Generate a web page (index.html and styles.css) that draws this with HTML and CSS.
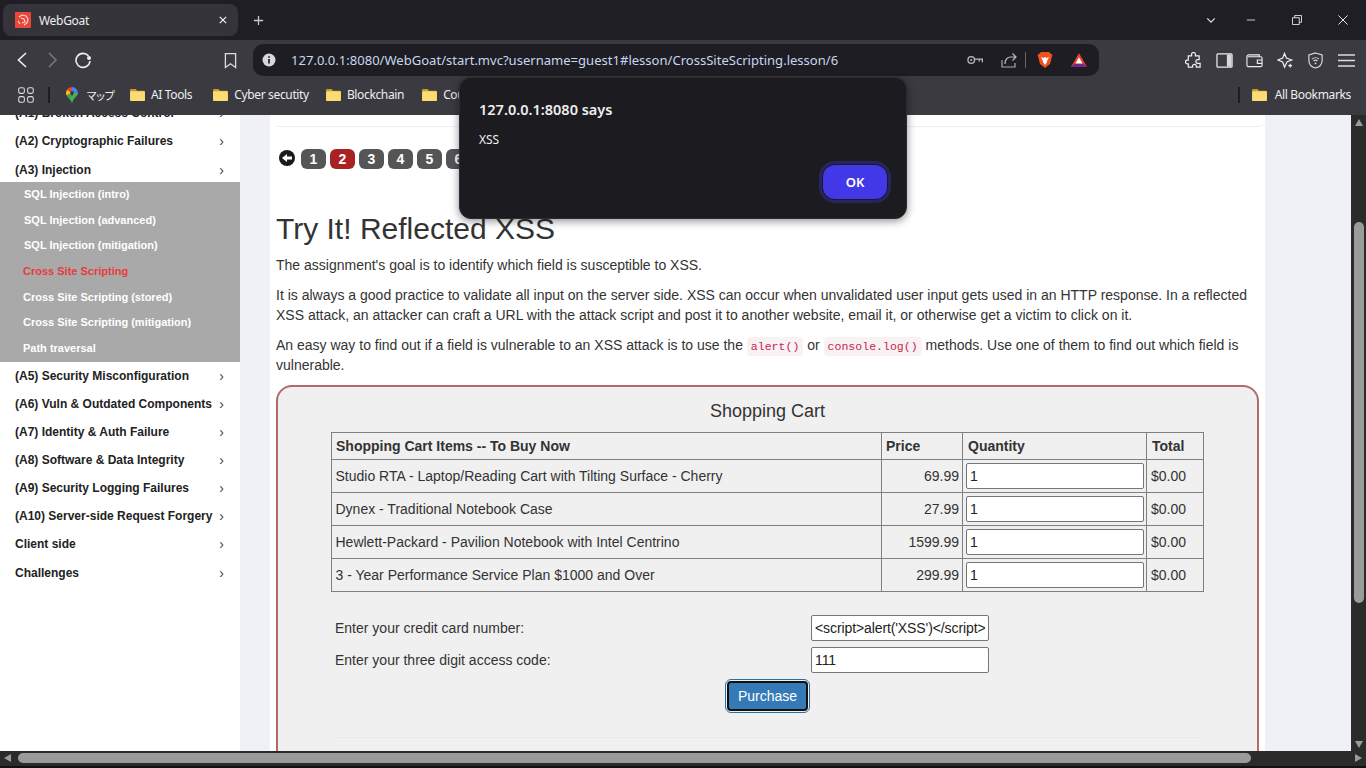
FILE: index.html
```html
<!DOCTYPE html>
<html lang="en">
<head>
  <meta charset="UTF-8">
  <title>WebGoat</title>
  <link rel="stylesheet" href="styles.css">
</head>
<body>
  <!-- Tab strip -->
  <div class="tabstrip">
    <div class="tab">
      <svg class="favicon" viewBox="0 0 16 16"><rect width="16" height="16" rx="1" fill="#e8483a"/><path d="M4 5l3-2 4 1 2 3-1 4-3 2M6 6l3 1 1 3-3 1M3 9l2 3" fill="none" stroke="#ffd9d2" stroke-width="1.1"/></svg>
      <span class="tab-title">WebGoat</span>
      <svg class="tab-close" viewBox="0 0 10 10"><path d="M1 1l8 8M9 1l-8 8" stroke="#f1f1f1" stroke-width="1.5"/></svg>
    </div>
    <svg class="new-tab" viewBox="0 0 12 12"><path d="M6 1v10M1 6h10" stroke="#c9c9cc" stroke-width="1.4"/></svg>
    <div class="win-controls">
      <svg class="win-chevron" viewBox="0 0 12 8"><path d="M1.5 1.5L6 6l4.5-4.5" fill="none" stroke="#e8e8e8" stroke-width="1.4"/></svg>
      <svg class="win-min" viewBox="0 0 12 2"><path d="M1 1h10" stroke="#e8e8e8" stroke-width="1"/></svg>
      <svg class="win-max" viewBox="0 0 11 11"><path d="M.5 3h7.5v7.5H.5zM3 3V.5h7.5V8H8" fill="none" stroke="#e8e8e8"/></svg>
      <svg class="win-close" viewBox="0 0 11 11"><path d="M.5.5l10 10M10.5.5l-10 10" stroke="#e8e8e8" stroke-width="1.1"/></svg>
    </div>
  </div>

  <!-- Toolbar -->
  <div class="toolbar">
    <svg class="nav-back" viewBox="0 0 10 16"><path d="M9 1L1.500 8 9 15" fill="none" stroke="#eee" stroke-width="1.6"/></svg>
    <svg class="nav-forward" viewBox="0 0 10 16"><path d="M1 1l7 7-7 7" fill="none" stroke="#77767b" stroke-width="1.6"/></svg>
    <svg class="nav-reload" viewBox="0 0 18 18"><path d="M14.5 5A7 7 0 1 0 16 10" fill="none" stroke="#eee" stroke-width="1.6"/><circle cx="15" cy="7" r="2" fill="#eee"/></svg>
    <svg class="nav-bookmark" viewBox="0 0 14 18"><path d="M1.5 1.5h11v15L7 12.500l-5.500 4z" fill="none" stroke="#ddd" stroke-width="1.4"/></svg>
    <div class="addressbar">
      <svg class="site-info" viewBox="0 0 14 14"><circle cx="7" cy="7" r="6.500" fill="#d8d8da"/><path d="M7 6v4.500M7 3.200v1.500" stroke="#1e1d23" stroke-width="1.700"/></svg>
      <span class="url">127.0.0.1:8080/WebGoat/start.mvc?username=guest1#lesson/CrossSiteScripting.lesson/6</span>
      <svg class="addr-key" viewBox="0 0 17 10"><circle cx="4.500" cy="5" r="3.500" fill="none" stroke="#bbb" stroke-width="1.400"/><circle cx="4.500" cy="5" r="1" fill="#bbb"/><path d="M8 4h8.300v3.500M13 4v2.500" fill="none" stroke="#bbb" stroke-width="1.400"/></svg>
      <svg class="addr-share" viewBox="0 0 16 16"><path d="M1 8v7h13v-4" fill="none" stroke="#aaa" stroke-width="1.200"/><path d="M4 12c0-5 3-7 6-7h5M11.500 1.500L15 5l-3.500 3.500" fill="none" stroke="#bbb" stroke-width="1.200"/></svg>
      <span class="addr-sep"></span>
      <svg class="addr-brave" viewBox="0 0 16 18"><path d="M4 1h8l1.500 1.500L15.500 4l-1 3-1.500 6-5 4-5-4-1.500-6-1-3L2.500 2.500z" fill="#f1531f"/><path d="M4 6l2.500 1L8 6l1.500 1L12 6l-1.500 3L9.500 12 8 14l-1.500-2-1-3z" fill="#fff"/></svg>
      <svg class="addr-bat" viewBox="0 0 20 18"><path d="M10 1L19 17H1z" fill="#e9402f"/><path d="M1 17l4.500-4h9l4.500 4z" fill="#6c2a8c"/><path d="M10 6l4 7H6z" fill="#fff"/></svg>
    </div>
    <div class="tool-icons">
      <svg viewBox="0 0 18 18"><path d="M7 2.500a2 2 0 0 1 4 0V4h4v4h-1.500a2 2 0 0 0 0 4H16v4h-4v-1a2 2 0 0 0-4 0v1H3.500v-3.500H2.500a2 2 0 0 1 0-4h1V4H7z" fill="none" stroke="#eee" stroke-width="1.300"/></svg>
      <svg viewBox="0 0 18 16"><rect x="1" y="1" width="16" height="14" rx="1" fill="none" stroke="#eee" stroke-width="1.300"/><rect x="11.500" y="1.500" width="5" height="13" fill="#d8d8d8"/></svg>
      <svg viewBox="0 0 18 16"><path d="M1 4a2 2 0 0 1 2-2h11v2M1 4v9a1.500 1.500 0 0 0 1.500 1.500h13A1.500 1.500 0 0 0 17 13V5.500A1.500 1.500 0 0 0 15.500 4H2M17 7.500h-5v3.500h5" fill="none" stroke="#eee" stroke-width="1.200"/></svg>
      <svg viewBox="0 0 18 18"><path d="M8 1.500l2 5 5.500 2-5 2-1 2.500-1.500 3-2-5.500-5-2 5-2z" fill="none" stroke="#eee" stroke-width="1.300"/><path d="M14 12.500v4M12 14.500h4" stroke="#eee" stroke-width="1.300"/></svg>
      <svg viewBox="0 0 16 18"><path d="M8 1l7 2v6c0 4-3 7-7 8-4-1-7-4-7-8V3z" fill="none" stroke="#ddd" stroke-width="1.200"/><path d="M4.500 7.500a5 5 0 0 1 7 0M6 9.500a3 3 0 0 1 4 0" fill="none" stroke="#ddd" stroke-width="1.200"/><circle cx="8" cy="12" r="1" fill="#ddd"/></svg>
      <svg viewBox="0 0 17 14"><path d="M0 1.500h17M0 7h17M0 12.500h17" stroke="#ddd" stroke-width="1.500"/></svg>
    </div>
  </div>

  <!-- Bookmarks bar -->
  <div class="bookmarks">
    <svg class="apps" viewBox="0 0 18 18"><g fill="none" stroke="#ddd" stroke-width="1.200"><rect x=".8" y=".8" width="6.400" height="6.400" rx="2"/><rect x="10.800" y=".8" width="6.400" height="6.400" rx="2"/><rect x=".8" y="10.800" width="6.400" height="6.400" rx="2"/><rect x="10.800" y="10.800" width="6.400" height="6.400" rx="2"/></g></svg>
    <span class="bm-sep"></span>
    <svg class="maps-pin" viewBox="0 0 12 16"><path d="M6 0a6 6 0 0 1 6 6H8a2 2 0 0 0-2-2z" fill="#4285f4"/><path d="M6 0a6 6 0 0 0-5 2.700L4.400 5A2 2 0 0 1 6 4z" fill="#ea4335"/><path d="M1 2.700A6 6 0 0 0 .6 8.500L4.400 7a2 2 0 0 1 0-2z" fill="#fbbc04"/><path d="M.6 8.500C2 11.500 5 13 6 16l2-5-3.600-4z" fill="#34a853"/><path d="M12 6c0 3-5 5-6 10l-1.200-5L8 6z" fill="#4caf50"/></svg>
    <span class="bm-label bm-first">マップ</span>
    <svg class="folder" viewBox="0 0 16 14"><use href="#folder-shape"/></svg><span class="bm-label bm-ai">AI Tools</span>
    <svg class="folder" viewBox="0 0 16 14"><use href="#folder-shape"/></svg><span class="bm-label bm-cyber">Cyber secutity</span>
    <svg class="folder" viewBox="0 0 16 14"><use href="#folder-shape"/></svg><span class="bm-label bm-chain">Blockchain</span>
    <svg class="folder" viewBox="0 0 16 14"><use href="#folder-shape"/></svg><span class="bm-label">Courses</span>
    <span class="bm-right">
      <span class="bm-sep"></span>
      <svg class="folder" viewBox="0 0 16 14"><use href="#folder-shape"/></svg><span class="bm-label">All Bookmarks</span>
    </span>
  </div>

  <svg class="defs" width="0" height="0"><defs><g id="folder-shape"><path d="M1 1h5l1.500 2H15a1 1 0 0 1 1 1v9a1 1 0 0 1-1 1H1a1 1 0 0 1-1-1V2a1 1 0 0 1 1-1z" fill="#c99a2e"/><rect y="3.500" width="16" height="10.500" rx="1" fill="#fbdc74"/></g></defs></svg>

  <!-- Page area -->
  <div class="viewport">
    <aside class="sidebar">
      <div class="menu-item">(A1) Broken Access Control<span class="chev">&rsaquo;</span></div>
      <div class="menu-item">(A2) Cryptographic Failures<span class="chev">&rsaquo;</span></div>
      <div class="menu-item menu-short">(A3) Injection<span class="chev">&rsaquo;</span></div>
      <div class="submenu">
        <div class="sub-item sub-sql">SQL Injection (intro)</div>
        <div class="sub-item sub-sql">SQL Injection (advanced)</div>
        <div class="sub-item sub-sql">SQL Injection (mitigation)</div>
        <div class="sub-item sub-active">Cross Site Scripting</div>
        <div class="sub-item">Cross Site Scripting (stored)</div>
        <div class="sub-item">Cross Site Scripting (mitigation)</div>
        <div class="sub-item">Path traversal</div>
      </div>
      <div class="menu-item">(A5) Security Misconfiguration<span class="chev">&rsaquo;</span></div>
      <div class="menu-item">(A6) Vuln &amp; Outdated Components<span class="chev">&rsaquo;</span></div>
      <div class="menu-item">(A7) Identity &amp; Auth Failure<span class="chev">&rsaquo;</span></div>
      <div class="menu-item">(A8) Software &amp; Data Integrity<span class="chev">&rsaquo;</span></div>
      <div class="menu-item">(A9) Security Logging Failures<span class="chev">&rsaquo;</span></div>
      <div class="menu-item">(A10) Server-side Request Forgery<span class="chev">&rsaquo;</span></div>
      <div class="menu-item">Client side<span class="chev">&rsaquo;</span></div>
      <div class="menu-item menu-last">Challenges<span class="chev">&rsaquo;</span></div>
    </aside>

    <main class="content-wrap">
      <div class="content">
        <div class="top-rule"></div>
        <div class="pager">
          <svg class="pager-back" viewBox="0 0 16 16"><circle cx="8" cy="8" r="8" fill="#1a1a1a"/><path d="M3 8l5-4v2.500h5v3H8V12z" fill="#fff"/></svg>
          <span class="pill">1</span>
          <span class="pill pill-active">2</span>
          <span class="pill">3</span>
          <span class="pill">4</span>
          <span class="pill">5</span>
          <span class="pill">6</span>
          <span class="pill">7</span>
        </div>
        <h1>Try It! Reflected XSS</h1>
        <p>The assignment's goal is to identify which field is susceptible to XSS.</p>
        <p>It is always a good practice to validate all input on the server side. XSS can occur when unvalidated user input gets used in an HTTP response. In a reflected XSS attack, an attacker can craft a URL with the attack script and post it to another website, email it, or otherwise get a victim to click on it.</p>
        <p>An easy way to find out if a field is vulnerable to an XSS attack is to use the <code>alert()</code> or <code>console.log()</code> methods. Use one of them to find out which field is vulnerable.</p>

        <!-- Shopping cart -->
        <div class="attack">
          <div class="cart-title">Shopping Cart</div>
          <table class="cart">
            <thead>
              <tr>
                <th class="col-item">Shopping Cart Items -- To Buy Now</th>
                <th class="col-price">Price</th>
                <th class="col-qty">Quantity</th>
                <th class="col-total">Total</th>
              </tr>
            </thead>
            <tbody>
              <tr>
                <td>Studio RTA - Laptop/Reading Cart with Tilting Surface - Cherry</td>
                <td class="num">69.99</td>
                <td><input class="qty" type="text" value="1"></td>
                <td>$0.00</td>
              </tr>
              <tr>
                <td>Dynex - Traditional Notebook Case</td>
                <td class="num">27.99</td>
                <td><input class="qty" type="text" value="1"></td>
                <td>$0.00</td>
              </tr>
              <tr>
                <td>Hewlett-Packard - Pavilion Notebook with Intel Centrino</td>
                <td class="num">1599.99</td>
                <td><input class="qty" type="text" value="1"></td>
                <td>$0.00</td>
              </tr>
              <tr>
                <td>3 - Year Performance Service Plan $1000 and Over</td>
                <td class="num">299.99</td>
                <td><input class="qty" type="text" value="1"></td>
                <td>$0.00</td>
              </tr>
            </tbody>
          </table>
          <div class="pay-row">
            <label>Enter your credit card number:</label>
            <input class="pay-input" type="text" value="<script>alert('XSS')</script>">
          </div>
          <div class="pay-row">
            <label>Enter your three digit access code:</label>
            <input class="pay-input" type="text" value="111">
          </div>
          <div class="pay-action"><button class="purchase" type="button">Purchase</button></div>
          <div class="bottom-rule"></div>
        </div>
      </div>
    </main>

    <div class="vscroll">
      <span class="arrow-up"></span>
      <span class="vthumb"></span>
      <span class="arrow-down"></span>
    </div>
  </div>

  <div class="hscroll">
    <span class="arrow-left"></span>
    <span class="hthumb"></span>
    <span class="arrow-right"></span>
  </div>

  <!-- Alert dialog -->
  <div class="dialog">
    <div class="dialog-title">127.0.0.1:8080 says</div>
    <div class="dialog-text">XSS</div>
    <div class="dialog-actions"><button class="dialog-ok" type="button">OK</button></div>
  </div>
</body>
</html>
```

FILE: styles.css
```css
* { box-sizing: border-box; }
html, body { margin: 0; height: 100%; }
body { width: 1366px; height: 768px; overflow: hidden; display: flex; flex-direction: column; font-family: "Liberation Sans", Arial, sans-serif; background: #1f1e24; position: relative; }
.defs { position: absolute; }

/* tab strip */
.tabstrip { height: 40px; flex: none; display: flex; align-items: flex-start; background: #1f1e24; padding: 4px 0 0 3px; }
.tab { width: 235px; height: 32px; background: #35343a; border-radius: 8px; display: flex; align-items: center; padding: 0 11px 0 12px; color: #eee; font: 12px "Noto Sans", sans-serif; letter-spacing: -.3px; }
.favicon { width: 16px; height: 16px; margin-right: 8px; }
.tab-title { flex: 1; }
.tab-close { width: 8px; height: 8px; }
.new-tab { width: 11px; height: 11px; margin: 11px 0 0 15px; }
.win-controls { margin-left: auto; display: flex; align-items: center; height: 32px; }
.win-chevron { width: 10px; height: 7px; margin-right: 30px; }
.win-min { width: 10px; height: 2px; margin-right: 36px; }
.win-max { width: 10px; height: 10px; margin-right: 36px; }
.win-close { width: 10px; height: 10px; margin-right: 18px; }

/* toolbar */
.toolbar { height: 40px; flex: none; display: flex; align-items: center; background: #3b3a41; }
.nav-back, .nav-forward { width: 10px; height: 16px; }
.nav-back { margin-left: 17px; }
.nav-forward { margin-left: 21px; }
.nav-reload { width: 18px; height: 18px; margin-left: 16px; }
.nav-bookmark { width: 13px; height: 17px; margin-left: 132px; }
.addressbar { width: 846px; height: 32px; margin-left: 16px; background: #1e1d23; border-radius: 10px; display: flex; align-items: center; padding-left: 9px; }
.site-info { width: 14px; height: 14px; }
.url { margin-left: 15px; color: #c6d8ee; font: 13.05px "Noto Sans", sans-serif; width: 676px; white-space: nowrap; }
.addr-key { width: 16px; height: 10px; }
.addr-share { width: 16px; height: 16px; margin-left: 18px; }
.addr-sep { width: 1px; height: 16px; background: #666; margin-left: 8px; }
.addr-brave { width: 16px; height: 18px; margin-left: 11px; }
.addr-bat { width: 18px; height: 16px; margin-left: 17px; }
.tool-icons { display: flex; align-items: center; margin-left: 86px; gap: 13.5px; }
.tool-icons svg { width: 17px; height: 17px; }

/* bookmarks */
.bookmarks { height: 35px; flex: none; display: flex; align-items: center; background: #3b3a41; color: #eee; font: 12px "Noto Sans", "Noto Sans CJK JP", sans-serif; letter-spacing: -.35px; padding: 0 0 6px 18px; overflow: hidden; }
.apps { width: 16px; height: 16px; }
.bm-sep { width: 2px; height: 16px; background: #1e1d23; margin: 0 16px 0 14px; }
.maps-pin { width: 12px; height: 16px; margin-right: 8px; }
.folder { width: 15px; height: 13px; margin-right: 6px; }
.bm-first { font-size: 11px; letter-spacing: -2px; margin-right: 17px; }
.bm-ai { margin-right: 21px; }
.bm-cyber { margin-right: 17px; }
.bm-chain { margin-right: 18px; }
.bm-right { margin-left: auto; display: flex; align-items: center; padding-right: 15px; }
.bm-right .bm-sep { margin-right: 12px; }
.bm-right .folder { margin-right: 8px; }

/* page */
.viewport { flex: 1; min-height: 0; display: flex; overflow: hidden; background: #eff1f7; }
.sidebar { width: 240px; flex: none; background: #fff; overflow: hidden; }
.menu-item { height: 28px; padding: 0 16px 0 15px; display: flex; align-items: center; justify-content: space-between; font-size: 12px; font-weight: bold; color: #222; }
.menu-item:first-child { margin-top: -16px; }
.menu-short { height: 27px; padding-top: 2px; }
.menu-last { padding-top: 2px; }
.chev { font-size: 14px; font-weight: normal; color: #444; }
.submenu { background: #a9a9a9; height: 180px; }
.sub-item { height: 25.7px; padding: 0 0 2px 23px; display: flex; align-items: center; font-size: 11px; font-weight: bold; color: #fff; }
.sub-sql { padding-left: 24px; }
.sub-active { color: #e93b3b; }

.content-wrap { width: 1111px; flex: none; padding: 0 86px 0 30px; overflow: hidden; }
.content { background: #fff; height: 100%; padding: 0 6px; color: #333; font-size: 14px; line-height: 20px; overflow: hidden; }
.top-rule { height: 12px; border-bottom: 1px solid #eee; margin-right: -6px; border-radius: 0 0 6px 0; }
.pager { display: flex; align-items: center; gap: 4px; margin-top: 22px; height: 20px; padding-left: 3px; }
.pager-back { width: 16px; height: 16px; margin: -3px 2px 0 0; }
.pill { width: 25px; height: 20px; background: #555; color: #fff; border-radius: 6px; font-size: 14px; font-weight: bold; line-height: 20px; text-align: center; }
.pill-active { background: #a82222; }
h1 { margin: 42px 0 0; font-size: 30px; font-weight: normal; line-height: 36px; color: #333; }
p { margin: 0 0 10px; }
h1 + p { margin-top: 8px; }
code { font-family: "Liberation Mono", monospace; font-size: 11.55px; line-height: 1; color: #c7254e; background: #f9f2f4; padding: 3px 4px; border-radius: 4px; }

.attack { height: 400px; background: #f0f0f0; border: 2px solid #b56a6a; border-radius: 16px; padding: 0 53px; }
.cart-title { font-size: 18px; line-height: 20px; text-align: center; margin: 14px 0 11px; }
.cart { border-collapse: collapse; width: 872px; table-layout: fixed; }
.cart th, .cart td { border: 1px solid #808080; padding: 0 4px; text-align: left; }
.cart th { height: 27px; }
.cart td { height: 33px; }
.cart th:nth-child(n+3) { padding-left: 5px; }
.cart td:first-child { padding-left: 3.5px; }
.col-item { width: 550px; }
.col-price { width: 81px; }
.col-qty { width: 184px; }
.col-total { width: 57px; }
.cart .num { text-align: right; padding-right: 3px; }
.cart td:nth-child(3) { padding: 0 3px; }
input { font: 14px "Liberation Sans", Arial, sans-serif; color: #222; background: #fff; border: 1px solid #767676; border-radius: 2px; padding: 0 3px; display: block; }
.qty { width: 178px; height: 26px; }
.pay-row { display: flex; align-items: center; justify-content: space-between; padding: 0 215px 0 4px; height: 26px; margin-bottom: 6px; }
.cart + .pay-row { margin-top: 23px; }
.pay-input { width: 178px; height: 26px; letter-spacing: -0.1px; }
.pay-action { text-align: center; }
.purchase { width: 81px; height: 30px; margin: 2px 0; background: #337ab7; color: #fff; font: 14px "Liberation Sans", Arial, sans-serif; border: 2px solid #111; border-radius: 4px; outline: 1px solid #2e6da4; outline-offset: 1px; }
.bottom-rule { border-top: 1px solid #eaeaea; margin: 24px 4px 0 4px; }

/* scrollbars */
.vscroll { width: 15px; flex: none; background: #2b2b2b; display: flex; flex-direction: column; align-items: center; }
.arrow-up { width: 0; height: 0; margin-top: 4px; border: 4.5px solid transparent; border-top: 0; border-bottom: 7px solid #9b9b9b; }
.vthumb { width: 10px; height: 381px; margin-top: 96px; background: #9b9b9b; border-radius: 5px; }
.arrow-down { width: 0; height: 0; margin-top: auto; margin-bottom: 3px; border: 4.5px solid transparent; border-bottom: 0; border-top: 7px solid #9b9b9b; }
.hscroll { height: 17px; flex: none; display: flex; align-items: flex-start; background: #2b2b2b; border-bottom: 2px solid #111; padding-top: 2px; }
.arrow-left { width: 0; height: 0; margin: 1px 0 0 4px; border: 4.5px solid transparent; border-left: 0; border-right: 7px solid #9b9b9b; }
.hthumb { width: 1233px; height: 10px; margin-left: 7px; background: #9b9b9b; border-radius: 5px; }
.arrow-right { width: 0; height: 0; margin: 1px 4px 0 auto; border: 4.5px solid transparent; border-right: 0; border-left: 7px solid #9b9b9b; }

/* alert */
.dialog { position: absolute; left: 459px; top: 77px; width: 448px; height: 142px; background: #1c1b20; border-radius: 12px; box-shadow: 0 2px 8px rgba(0,0,0,.45); border: 1px solid #2c2b31; padding: 21px 19px 0; color: #eee; font-family: "Noto Sans", sans-serif; }
.dialog-title { font-size: 14.5px; font-weight: 600; line-height: 20px; }
.dialog-text { font-size: 12px; line-height: 18px; margin-top: 12px; }
.dialog-actions { display: flex; justify-content: flex-end; margin-top: 16px; }
.dialog-ok { width: 64px; height: 34px; background: #4338e8; color: #fff; border: none; border-radius: 12px; outline: 3px solid #27255f; outline-offset: 1px; font: 600 13px "Noto Sans", sans-serif; }
```
